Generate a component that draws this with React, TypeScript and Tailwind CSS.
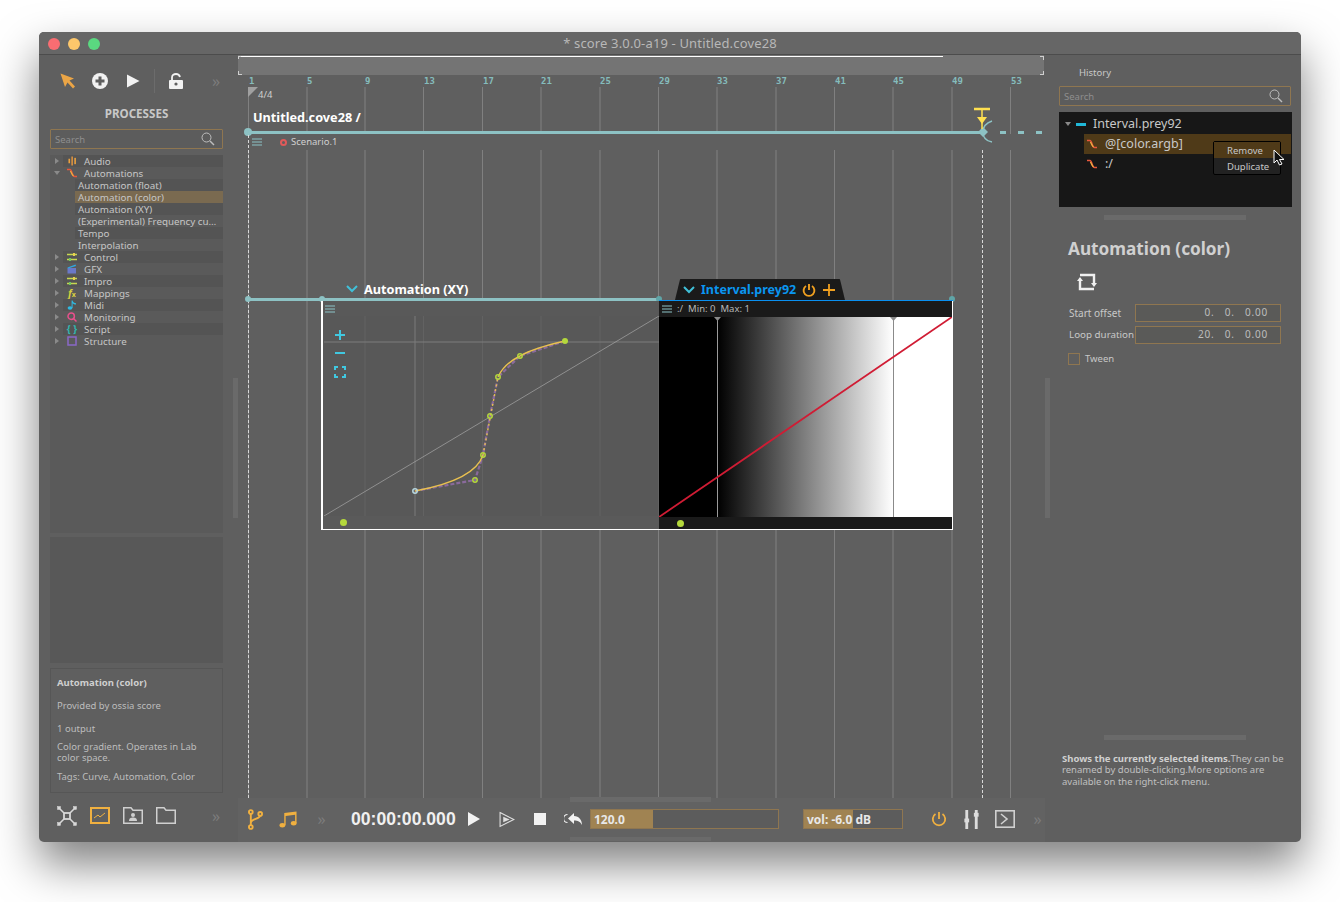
import React from 'react'

const GRID = [
  { n: 1, x: 248, wide: false }, { n: 5, x: 306, wide: true }, { n: 9, x: 364, wide: true }, { n: 13, x: 423, wide: false },
  { n: 17, x: 482, wide: false }, { n: 21, x: 540, wide: true }, { n: 25, x: 599, wide: true }, { n: 29, x: 658, wide: false },
  { n: 33, x: 716, wide: true }, { n: 37, x: 775, wide: true }, { n: 41, x: 834, wide: false }, { n: 45, x: 892, wide: true },
  { n: 49, x: 951, wide: true }, { n: 53, x: 1010, wide: false },
]

const FONT = "font-['Noto_Sans',sans-serif]"

function Chevrons() {
  return <span className="text-[16px] leading-none text-[#7c7c7c]">»</span>
}

function Squiggle({ className = 'w-[12px] h-[10px]' }: { className?: string }) {
  return (
    <svg viewBox="0 0 12 10" className={className} fill="none">
      <path d="M1 1.5 H4 C6 1.5 6 8.5 8.5 8.5 H11" stroke="#e8583c" strokeWidth="1.5" />
      <path d="M4.5 3 C5.5 5 6 7 7.5 8" stroke="#f0b040" strokeWidth="1.2" />
    </svg>
  )
}

function Sliders() {
  return (
    <svg viewBox="0 0 12 10" className="w-[12px] h-[10px]" fill="none" stroke="#c8d850" strokeWidth="1.4">
      <path d="M1 2.5H11M1 7.5H11" />
      <path d="M8 1V4" stroke="#e8d050" strokeWidth="2" />
      <path d="M4 6V9" stroke="#70c860" strokeWidth="2" />
    </svg>
  )
}

const TREE_ICONS: Record<string, React.ReactNode> = {
  Audio: (
    <svg viewBox="0 0 10 10" className="w-[9px] h-[10px]" fill="#e8a040">
      <rect x="0.5" y="2.5" width="1.8" height="5" /><rect x="3.7" y="0" width="1.8" height="10" fill="#d89040" /><rect x="7" y="1.5" width="1.8" height="7" />
    </svg>
  ),
  Automations: <Squiggle />,
  Control: <Sliders />,
  GFX: (
    <svg viewBox="0 0 10 10" className="w-[10px] h-[10px]">
      <rect x="0.5" y="4" width="8.5" height="5.5" fill="#6a78c8" />
      <path d="M0.5 3.5 L8.5 0.5 L9 2 L1 4.5Z" fill="#30a8e0" />
    </svg>
  ),
  Impro: <Sliders />,
  Mappings: <span className="text-[10px] leading-none italic font-bold text-[#d8d040]">f<span className="text-[7px] not-italic">x</span></span>,
  Midi: (
    <svg viewBox="0 0 10 10" className="w-[10px] h-[10px]" fill="#30b8e0">
      <ellipse cx="3" cy="8" rx="2.4" ry="1.8" />
      <path d="M4.6 0.5H5.6C6 2.5 7.5 3 9 3.2V4.6C7.5 4.6 6.4 4 5.6 3.2V8H4.6Z" />
    </svg>
  ),
  Monitoring: (
    <svg viewBox="0 0 10 10" className="w-[10px] h-[10px]" fill="none" stroke="#e8508c" strokeWidth="1.5">
      <circle cx="4.2" cy="4.2" r="3.2" /><path d="M6.5 6.5L9.5 9.5" />
    </svg>
  ),
  Script: <span className="text-[10px] leading-none font-bold text-[#30b8b0]">{'{ }'}</span>,
  Structure: (
    <svg viewBox="0 0 10 10" className="w-[10px] h-[10px]" fill="none" stroke="#8a68c8" strokeWidth="1.5">
      <rect x="1" y="1" width="8" height="8" />
    </svg>
  ),
}

function Arrow({ open = false }: { open?: boolean }) {
  return open ? (
    <span className="w-0 h-0 border-x-[3px] border-x-transparent border-t-[4px] border-t-[#8a8a8a]" />
  ) : (
    <span className="w-0 h-0 border-y-[3px] border-y-transparent border-l-[4px] border-l-[#8a8a8a]" />
  )
}

function TreeRow({ label, odd, open }: { label: string; odd: boolean; open?: boolean }) {
  return (
    <div className="flex items-center h-[12px]">
      <div className="w-[13px] flex justify-center pl-[1px]"><Arrow open={open} /></div>
      <div className={`flex-1 flex items-center h-full ${odd ? 'bg-[#5a5a5a]' : 'bg-[#545454]'}`}>
        <div className="w-[21px] pr-[3px] flex justify-center">{TREE_ICONS[label]}</div>
        <span className="text-[9.8px] leading-none pt-[1px] text-[#c6c6c6]">{label}</span>
      </div>
    </div>
  )
}

function SubRow({ label, odd, selected }: { label: string; odd: boolean; selected?: boolean }) {
  return (
    <div className="flex h-[12px] pl-[25px]">
      <div className={`flex-1 flex items-center pl-[3px] min-w-0 ${selected ? 'bg-[#7a6a50]' : odd ? 'bg-[#5a5a5a]' : 'bg-[#545454]'}`}>
        <span className="text-[9.8px] leading-none pt-[1px] text-[#c6c6c6] whitespace-nowrap">{label}</span>
      </div>
    </div>
  )
}

function SearchBox({ className }: { className: string }) {
  return (
    <div className={`flex items-center justify-between h-[20px] border border-[#8f7650] rounded-[1px] bg-[#5c5c5c] pl-[4px] pr-[7px] ${className}`}>
      <span className="text-[9.5px] pt-[2px] text-[#8e8e8e]">Search</span>
      <svg viewBox="0 0 14 14" className="w-[14px] h-[14px]" fill="none" stroke="#bdbdbd" strokeWidth="1">
        <circle cx="5.5" cy="5.5" r="4.5" /><path d="M9 9L13 13" strokeWidth="1.4" />
      </svg>
    </div>
  )
}

function LeftPanel() {
  return (
    <div className="w-[199px] shrink-0 flex flex-col pl-[2px]">
      <div className="h-[51px] flex items-center pl-[16px]">
        <div className="w-[22px] flex justify-center">
          <svg viewBox="0 0 16 16" className="w-[16px] h-[16px]" fill="#eba546"><path d="M0.5 0.5L14 5.5L9.5 7.5L15 13.5L13 15.5L7.5 9.5L5 14Z" /></svg>
        </div>
        <div className="w-[33px] ml-[4px] flex justify-center">
          <svg viewBox="0 0 16 16" className="w-[16px] h-[16px]"><circle cx="8" cy="8" r="8" fill="#f2f2f2" /><path d="M8 3.5V12.5M3.5 8H12.5" stroke="#5f5f5f" strokeWidth="3" /></svg>
        </div>
        <div className="w-[33px] flex justify-center">
          <svg viewBox="0 0 14 14" className="w-[14px] h-[14px]" fill="#f2f2f2"><path d="M1 0.5L13.5 7L1 13.5Z" /></svg>
        </div>
        <div className="w-[1px] h-[24px] ml-[5px] bg-[#6c6c6c]" />
        <div className="w-[41px] flex justify-center">
          <svg viewBox="0 0 14 16" className="w-[14px] h-[16px]">
            <path d="M3 7V4.5C3 2 5 1 7 1C9 1 10.5 2.2 11 4" fill="none" stroke="#f2f2f2" strokeWidth="1.8" />
            <rect x="0" y="7" width="14" height="9" rx="1" fill="#f2f2f2" />
            <circle cx="7" cy="11" r="1.6" fill="#5f5f5f" />
          </svg>
        </div>
        <div className="ml-[16px]"><Chevrons /></div>
      </div>
      <div className="text-center text-[11.6px] font-bold text-[#c8c8c8] leading-[14px] mt-[1px] pr-[6px]">PROCESSES</div>
      <SearchBox className="ml-[9px] w-[173px] mt-[8px]" />
      <div className="ml-[9px] w-[173px] h-[378px] mt-[6px] bg-[#5a5a5a]">
        <TreeRow label="Audio" odd={false} />
        <TreeRow label="Automations" odd open />
        <SubRow label="Automation (float)" odd={false} />
        <SubRow label="Automation (color)" odd selected />
        <SubRow label="Automation (XY)" odd={false} />
        <SubRow label="(Experimental) Frequency cu…" odd />
        <SubRow label="Tempo" odd={false} />
        <SubRow label="Interpolation" odd />
        <TreeRow label="Control" odd={false} />
        <TreeRow label="GFX" odd />
        <TreeRow label="Impro" odd={false} />
        <TreeRow label="Mappings" odd />
        <TreeRow label="Midi" odd={false} />
        <TreeRow label="Monitoring" odd />
        <TreeRow label="Script" odd={false} />
        <TreeRow label="Structure" odd />
      </div>
      <div className="ml-[9px] w-[173px] h-[126px] mt-[4px] bg-[#585858]" />
      <div className="ml-[9px] w-[173px] h-[125px] mt-[5px] border border-[#565656] px-[6px] pt-[8px] text-[9.5px] leading-[11px] text-[#bdbdbd]">
        <div className="font-bold text-[#cfcfcf]">Automation (color)</div>
        <div className="mt-[12px]">Provided by ossia score</div>
        <div className="mt-[12px]">1 output</div>
        <div className="mt-[7px]">Color gradient. Operates in Lab<br />color space.</div>
        <div className="mt-[8px]">Tags: Curve, Automation, Color</div>
      </div>
      <div className="flex-1 flex items-center pl-[9px] pb-[4px]">
        <div className="w-[33px] flex justify-center">
          <svg viewBox="0 0 20 20" className="w-[20px] h-[20px]" fill="#d8d8d8" stroke="#d8d8d8">
            <rect x="0.5" y="0.5" width="3" height="3" strokeWidth="0.5" /><rect x="16.5" y="0.5" width="3" height="3" strokeWidth="0.5" />
            <rect x="0.5" y="16.5" width="3" height="3" strokeWidth="0.5" /><rect x="16.5" y="16.5" width="3" height="3" strokeWidth="0.5" />
            <path d="M3 3L7 7M17 3L13 7M3 17L7 13M17 17L13 13" strokeWidth="1.6" />
            <rect x="7" y="7" width="6" height="6" fill="none" strokeWidth="1.8" />
          </svg>
        </div>
        <div className="w-[33px] flex justify-center">
          <svg viewBox="0 0 20 17" className="w-[20px] h-[17px]" fill="none">
            <rect x="1" y="1" width="18" height="15" stroke="#f0b040" strokeWidth="2" />
            <path d="M4 11L8 8L10 10L15 6" stroke="#f0b040" strokeWidth="1" />
          </svg>
        </div>
        <div className="w-[33px] flex justify-center">
          <svg viewBox="0 0 20 17" className="w-[20px] h-[17px]" fill="none" stroke="#d0d0d0">
            <path d="M0.75 16.25V0.75H8L10 3.25H19.25V16.25Z" strokeWidth="1.5" />
            <circle cx="10" cy="8" r="2" fill="#d0d0d0" stroke="none" />
            <path d="M6 14C6 11 8 10.5 10 10.5C12 10.5 14 11 14 14Z" fill="#d0d0d0" stroke="none" />
          </svg>
        </div>
        <div className="w-[33px] flex justify-center">
          <svg viewBox="0 0 20 17" className="w-[20px] h-[17px]" fill="none" stroke="#d0d0d0" strokeWidth="1.5">
            <path d="M0.75 16.25V0.75H8L10 3.25H19.25V16.25Z" />
          </svg>
        </div>
        <div className="ml-[30px]"><Chevrons /></div>
      </div>
    </div>
  )
}

function ProcessBoxes() {
  return (
    <div className="absolute left-[83px] top-[246px] w-[632px] h-[229px] flex border-b-[1px] border-white">
      {/* Automation (XY) */}
      <div className="w-[338px] flex flex-col border-l-[2px] border-white">
        <div className="h-[15px] bg-[#595959] flex items-center pl-[2px]">
          <svg viewBox="0 0 10 8" className="w-[10px] h-[8px]" fill="none" stroke="#8cc4c8" strokeWidth="1"><path d="M0 1H10M0 4H10M0 7H10" /></svg>
        </div>
        <div className="relative h-[200px] bg-[#555555]/70">
          <svg viewBox="0 0 335 200" className="absolute left-[1px] top-0 w-[335px] h-[200px]" fill="none">
            <path d="M0 26H335" stroke="#7c7c7c" />
            <path d="M91 0V200" stroke="#7a7a7a" />
            <path d="M0 200L335 0" stroke="#a8a8a8" strokeWidth="0.7" />
            <path d="M91 175L151 164L159 139L166 100L174 61L196 40L241 25" stroke="#8a6a9c" strokeWidth="2.2" strokeDasharray="4 2" />
            <path d="M91 175Q151 164 159 139M174 61Q180 48 196 40Q210 32 241 25" stroke="#e8c050" strokeWidth="1.4" />
            <path d="M159 139L174 61" stroke="#e8c050" strokeWidth="1.4" strokeDasharray="2 3" />
            {[[151, 164], [159, 139], [166, 100], [174, 61], [196, 40]].map(([cx, cy]) => (
              <circle key={cx} cx={cx} cy={cy} r="2.2" stroke="#b4d83c" strokeWidth="1.5" />
            ))}
            <circle cx="91" cy="175" r="2.2" stroke="#b8d8e0" strokeWidth="1.5" />
            <circle cx="241" cy="25" r="3" fill="#b4d83c" />
          </svg>
          <div className="absolute left-[11px] top-[14px] flex flex-col items-center gap-[8px]">
            <svg viewBox="0 0 10 10" className="w-[10px] h-[10px]" stroke="#40c8e0" strokeWidth="2"><path d="M5 0V10M0 5H10" /></svg>
            <svg viewBox="0 0 10 10" className="w-[10px] h-[10px]" stroke="#40c8e0" strokeWidth="2"><path d="M0 5H10" /></svg>
            <svg viewBox="0 0 12 12" className="w-[12px] h-[12px]" fill="none" stroke="#40c8e0" strokeWidth="2"><path d="M1 4V1H4M8 1H11V4M11 8V11H8M4 11H1V8" /></svg>
          </div>
        </div>
        <div className="flex-1 bg-[#5a5a5a] flex items-center pl-[17px]">
          <span className="w-[7px] h-[7px] rounded-full bg-[#b4d83c]" />
        </div>
      </div>
      {/* Automation (color) */}
      <div className="flex-1 flex flex-col border-r-[1px] border-white">
        <div className="h-[16px] bg-[#1a1a1a] flex items-center pl-[3px] gap-[5px] text-[9.5px] leading-none text-[#b8b8b8]">
          <svg viewBox="0 0 10 8" className="w-[10px] h-[8px]" fill="none" stroke="#8cc4c8" strokeWidth="1"><path d="M0 1H10M0 4H10M0 7H10" /></svg>
          <span>:/</span>
          <span>Min: 0</span>
          <span>Max: 1</span>
        </div>
        <div className="relative h-[200px] bg-[linear-gradient(90deg,#000_20%,#fff_80%)]">
          <svg viewBox="0 0 293 200" className="absolute inset-0 w-[293px] h-[200px]" fill="none">
            <path d="M58.5 0V200" stroke="#9a9a9a" />
            <path d="M234.5 0V200" stroke="#8a8a8a" />
            <path d="M55 0H62L58.5 4Z M231 0H238L234.5 4Z" fill="#8a8a8a" />
            <path d="M0 200L293 0" stroke="#d01c34" strokeWidth="1.8" />
          </svg>
        </div>
        <div className="flex-1 bg-[#1a1a1a] flex items-center pl-[18px]">
          <span className="w-[7px] h-[7px] rounded-full bg-[#b4d83c]" />
        </div>
      </div>
    </div>
  )
}

function Canvas() {
  return (
    <div className="relative flex-1 overflow-hidden">
      {/* top mini-map band */}
      <div className="relative h-[20px] w-[806px] bg-[#747474]">
        <div className="absolute left-0 top-[1px] w-[705px] h-[1px] bg-white" />
        <div className="absolute left-0 top-[1px] w-[3px] h-[3px] border-t border-l border-[#cfcfcf]" />
        <div className="absolute left-0 bottom-0 w-[4px] h-[4px] border-b border-l border-[#cfcfcf]" />
        <div className="absolute right-0 top-[1px] w-[4px] h-[4px] border-t border-r border-[#cfcfcf]" />
        <div className="absolute right-0 bottom-0 w-[4px] h-[4px] border-b border-r border-[#cfcfcf]" />
      </div>

      {GRID.map((g) => (
        <React.Fragment key={g.n}>
          <span
            className="absolute top-[21px] text-[9px] leading-[11px] font-bold text-[#85bcbc] font-['DejaVu_Sans_Mono',monospace]"
            style={{ left: g.x - 238 + 1 }}
          >
            {g.n}
          </span>
          <div
            className={`absolute top-[32px] bottom-0 ${g.wide ? 'w-[2px] bg-[#707070]' : 'w-[1px] bg-[#808080]'}`}
            style={{ left: g.x - 238 }}
          />
        </React.Fragment>
      ))}

      <svg viewBox="0 0 10 10" className="absolute left-[10px] top-[32px] w-[10px] h-[10px]"><path d="M0 0H10L0 10Z" fill="#a0a0a0" /></svg>
      <span className="absolute left-[20px] top-[34px] text-[9.5px] leading-[12px] text-[#d0d0d0]">4/4</span>
      <span className="absolute left-[15px] top-[54px] text-[12.7px] leading-[16px] font-bold text-white">Untitled.cove28 /</span>

      {/* scenario header */}
      <div className="absolute left-[10px] top-[79px] w-[785px] h-[16px] bg-[#5f5f5f] flex items-center pl-[4px]">
        <svg viewBox="0 0 10 8" className="w-[10px] h-[8px]" fill="none" stroke="#8cc4c8" strokeWidth="1"><path d="M0 1H10M0 4H10M0 7H10" /></svg>
        <span className="ml-[18px] w-[7px] h-[7px] rounded-full border-2 border-[#e05a5a]" />
        <span className="ml-[4px] text-[9.5px] leading-none text-[#d0d0d0]">Scenario.1</span>
      </div>

      {/* main interval */}
      <div className="absolute left-[10px] top-[76px] w-[735px] h-[3px] bg-[#8dc2c4]" />
      <span className="absolute left-[6px] top-[73px] w-[8px] h-[8px] rounded-full bg-[#8dc2c4]" />
      <div className="absolute left-[762px] top-[76px] w-[42px] h-[3px] bg-[repeating-linear-gradient(90deg,#8dc2c4_0,#8dc2c4_6px,transparent_6px,transparent_18px)]" />
      <svg viewBox="0 0 24 32" className="absolute left-[735px] top-[62px] w-[24px] h-[32px]" fill="none">
        <path d="M10 10L5 15L10 20L15 15Z" fill="#8dc2c4" />
        <path d="M19 4C13 6 10 10 10 15C10 20 13 24 19 25" stroke="#8dc2c4" strokeWidth="1.5" />
      </svg>
      <svg viewBox="0 0 18 26" className="absolute left-[735px] top-[52px] w-[18px] h-[26px]" fill="none">
        <path d="M1 2H17" stroke="#ffe050" strokeWidth="2.5" />
        <path d="M9 2V22" stroke="#ffe050" strokeWidth="1.5" />
        <path d="M4 10H14L9 17Z" fill="#ffe050" />
      </svg>

      {/* dashed bounds */}
      <div className="absolute left-[10px] top-[80px] bottom-0 border-l border-dashed border-[#d8d8d8]" />
      <div className="absolute left-[744px] top-[95px] bottom-0 border-l border-dashed border-[#d8d8d8]" />

      {/* second interval */}
      <div className="absolute left-[10px] top-[243px] w-[410px] h-[3px] bg-[#8dc2c4]" />
      <span className="absolute left-[7px] top-[241px] w-[6px] h-[6px] rounded-full bg-[#8dc2c4]" />
      <span className="absolute left-[81px] top-[241px] w-[6px] h-[6px] rounded-full bg-[#8dc2c4]" />
      <span className="absolute left-[418px] top-[241px] w-[6px] h-[6px] rounded-full bg-[#5fa5a8]" />
      <span className="absolute left-[711px] top-[241px] w-[6px] h-[6px] rounded-full bg-[#5fa5a8]" />
      <div className="absolute left-[108px] top-[226px] flex items-center gap-[6px]">
        <svg viewBox="0 0 12 8" className="w-[12px] h-[8px]" fill="none" stroke="#40c0d8" strokeWidth="2"><path d="M1 1L6 6L11 1" /></svg>
        <span className="text-[12.7px] leading-[16px] font-bold text-white">Automation (XY)</span>
      </div>

      {/* tab over the selected interval */}
      <div className="absolute left-[437px] top-[224px] w-[170px] h-[21px] bg-[#1a1a1a] rounded-t-[6px] [clip-path:polygon(3%_0,97%_0,100%_100%,0_100%)] flex items-center pl-[8px]">
        <svg viewBox="0 0 12 8" className="w-[12px] h-[8px]" fill="none" stroke="#40c0d8" strokeWidth="2"><path d="M1 1L6 6L11 1" /></svg>
        <span className="ml-[6px] text-[12.5px] leading-[16px] font-bold text-[#0a96f0]">Interval.prey92</span>
        <svg viewBox="0 0 14 14" className="ml-[6px] w-[14px] h-[14px]" fill="none" stroke="#f0a020" strokeWidth="1.9"><path d="M7 1V7" /><path d="M4 3A5.4 5.4 0 1 0 10 3" /></svg>
        <svg viewBox="0 0 12 12" className="ml-[7px] w-[12px] h-[12px]" stroke="#f0a020" strokeWidth="1.8"><path d="M6 0V12M0 6H12" /></svg>
      </div>
      <div className="absolute left-[421px] top-[245px] w-[294px] h-[2px] bg-[#0a90f0]" />

      <ProcessBoxes />
    </div>
  )
}

function Slot({ children }: { children: React.ReactNode }) {
  return <div className="w-[33px] flex justify-center items-center shrink-0">{children}</div>
}

function Transport() {
  return (
    <div className="relative h-[44px] shrink-0 flex items-center bg-[#626262] pl-[1px] pb-[2px]">
      <Slot>
        <svg viewBox="0 0 16 22" className="w-[15px] h-[21px]" fill="none" stroke="#f0b040" strokeWidth="2">
          <circle cx="3" cy="3" r="2" /><circle cx="13" cy="5" r="2" /><circle cx="3" cy="19" r="2" />
          <path d="M3 5V17M3 15C3 10 12 11 13 7" />
        </svg>
      </Slot>
      <Slot>
        <svg viewBox="0 0 20 18" className="w-[19px] h-[17px]" fill="#f0b040">
          <ellipse cx="3.5" cy="15" rx="3" ry="2.4" /><ellipse cx="15.5" cy="13" rx="3" ry="2.4" />
          <path d="M5.5 15V2L18.5 0.5V13H17V4L7 5.2V15Z" />
        </svg>
      </Slot>
      <Slot><Chevrons /></Slot>
      <span className="ml-[13px] w-[106px] pt-[2px] shrink-0 whitespace-nowrap text-[17.6px] leading-none font-bold text-[#f0f0f0] font-['Liberation_Sans',sans-serif]">00:00:00.000</span>
      <Slot>
        <svg viewBox="0 0 12 14" className="w-[12px] h-[14px]" fill="#f2f2f2"><path d="M0 0L12 7L0 14Z" /></svg>
      </Slot>
      <Slot>
        <svg viewBox="0 0 15 15" className="w-[16px] h-[17px]" fill="none" stroke="#e0e0e0"><path d="M1 1L14 7.5L1 14Z" /><path d="M4 5L10 7.5L4 10Z" fill="#e0e0e0" stroke="none" /></svg>
      </Slot>
      <Slot><span className="block w-[12px] h-[12px] bg-[#f2f2f2]" /></Slot>
      <Slot>
        <svg viewBox="0 0 18 12" className="w-[18px] h-[12px]" fill="#f2f2f2">
          <path d="M10 0V3C15 3 18 7 18 12C16 8.5 14 7.5 10 7.5V11L4 5.5Z" />
          <path d="M3.5 1.5A4 4 0 0 0 3.5 9.5" fill="none" stroke="#f2f2f2" strokeWidth="1.2" />
        </svg>
      </Slot>
      <div className="relative ml-[1px] w-[189px] h-[20px] border border-[#8f7650] bg-[#5c5c5c] shrink-0">
        <div className="h-full w-[62px] bg-[#a08352]" />
        <span className="absolute left-[3px] top-0 text-[12px] leading-[19px] font-bold text-[#e8e8e8]">120.0</span>
      </div>
      <div className="relative ml-[24px] w-[100px] h-[20px] border border-[#8f7650] bg-[#5c5c5c] shrink-0">
        <div className="h-full w-[49px] bg-[#a08352]" />
        <span className="absolute left-[3px] top-0 text-[12px] leading-[19px] font-bold text-[#e8e8e8] whitespace-nowrap">vol: -6.0 dB</span>
      </div>
      <div className="ml-[19px] flex">
        <Slot>
          <svg viewBox="0 0 16 16" className="w-[16px] h-[16px]" fill="none" stroke="#f0b040" strokeWidth="1.8"><path d="M8 1V8" /><path d="M4.5 3A6.2 6.2 0 1 0 11.5 3" /></svg>
        </Slot>
        <Slot>
          <svg viewBox="0 0 15 20" className="w-[15px] h-[19px]" fill="#dcdcdc">
            <rect x="1" y="0" width="3" height="20" /><rect x="11" y="0" width="3" height="20" />
            <rect x="0" y="9" width="5" height="4" /><rect x="10" y="3" width="5" height="4" />
          </svg>
        </Slot>
        <Slot>
          <svg viewBox="0 0 20 18" className="w-[20px] h-[18px]" fill="none" stroke="#d0d0d0" strokeWidth="1.6"><rect x="0.8" y="0.8" width="18.4" height="16.4" /><path d="M6 4L12 9L6 14" /></svg>
        </Slot>
        <Slot><Chevrons /></Slot>
      </div>
      <div className="absolute left-[332px] top-[-1px] w-[141px] h-[5px] bg-[#6a6a6a]" />
      <div className="absolute left-[332px] bottom-[1px] w-[141px] h-[4px] bg-[#6a6a6a]" />
    </div>
  )
}

function RightPanel() {
  return (
    <div className="relative w-[256px] shrink-0">
      <div className="pl-[34px] pt-[12px] text-[9.5px] leading-[12px] text-[#c8c8c8]">History</div>
      <SearchBox className="ml-[14px] w-[232px] mt-[7px]" />
      <div className="relative ml-[14px] w-[233px] h-[95px] mt-[6px] bg-[#171717] pt-[1px] text-[12.5px] leading-[20px] text-[#c8c8c8]">
        <div className="flex items-center h-[20px] mt-[1px]">
          <div className="w-[17px] flex justify-center pl-[1px]"><Arrow open /></div>
          <span className="w-[10px] h-[3px] bg-[#20b8d8]" />
          <span className="ml-[7px]">Interval.prey92</span>
        </div>
        <div className="flex items-center h-[20px] ml-[25px] bg-[#4f3a18] pl-[4px] mr-[1px]">
          <Squiggle className="w-[12px] h-[10px] -ml-[2px]" />
          <span className="ml-[7px]">@[color.argb]</span>
        </div>
        <div className="flex items-center h-[20px] ml-[25px] pl-[4px]">
          <Squiggle className="w-[12px] h-[10px] -ml-[2px]" />
          <span className="ml-[7px]">:/</span>
        </div>
        <div className="absolute left-[154px] top-[29px] w-[68px] h-[34px] bg-[#222222] border border-black rounded-[2px] text-[9.5px] text-[#c8c8c8]">
          <div className="h-[16px] leading-[18px] bg-[#4f3a18] pl-[13px]">Remove</div>
          <div className="h-[16px] leading-[17px] pl-[13px]">Duplicate</div>
        </div>
        <svg viewBox="0 0 12 17" className="absolute left-[214px] top-[37px] w-[12px] h-[17px]">
          <path d="M1 1V14L4 11L6.5 16L9 15L6.5 10.5H11Z" fill="#111" stroke="#fff" strokeWidth="1" />
        </svg>
      </div>
      <div className="ml-[59px] w-[142px] h-[5px] mt-[8px] bg-[#6a6a6a]" />
      <div className="pl-[23px] mt-[19px] text-[17.2px] leading-[20px] font-bold text-[#d0d0d0]">Automation (color)</div>
      <div className="pl-[32px] mt-[14px]">
        <svg viewBox="0 0 20 18" className="w-[20px] h-[18px]" fill="none" stroke="#f0f0f0" strokeWidth="2.4">
          <path d="M3 7V16H17" /><path d="M17 11V2H3" />
          <path d="M0 8L3 4L6 8Z" fill="#f0f0f0" stroke="none" /><path d="M14 10L17 14L20 10Z" fill="#f0f0f0" stroke="none" />
        </svg>
      </div>
      <div className="flex items-center mt-[13px] h-[18px]">
        <span className="w-[90px] pl-[24px] text-[10px] text-[#c8c8c8] whitespace-nowrap">Start offset</span>
        <div className="w-[146px] h-full border border-[#8f7650] bg-[#5a5a58] text-right pr-[12px] text-[10px] leading-[14px] tracking-[0.8px] text-[#bdbdbd] whitespace-pre">0.   0.   0.00</div>
      </div>
      <div className="flex items-center mt-[4px] h-[18px]">
        <span className="w-[90px] pl-[24px] text-[9.8px] text-[#c8c8c8] whitespace-nowrap">Loop duration</span>
        <div className="w-[146px] h-full border border-[#8f7650] bg-[#5a5a58] text-right pr-[12px] text-[10px] leading-[14px] tracking-[0.8px] text-[#bdbdbd] whitespace-pre">20.   0.   0.00</div>
      </div>
      <div className="flex items-center pl-[23px] mt-[9px]">
        <span className="w-[12px] h-[12px] border border-[#8f7650]" />
        <span className="ml-[5px] text-[9.5px] leading-[12px] text-[#c8c8c8]">Tween</span>
      </div>
      <div className="ml-[59px] w-[142px] h-[5px] mt-[370px] bg-[#6a6a6a]" />
      <div className="pl-[17px] pr-[14px] mt-[13px] text-[9.5px] leading-[11.3px] text-[#c0c0c0] whitespace-nowrap">
        <div><b className="font-bold text-[#d0d0d0]">Shows the currently selected items.</b><span>They can be</span></div>
        <div>renamed by double-clicking.More options are</div>
        <div>available on the right-click menu.</div>
      </div>
    </div>
  )
}

export default function App() {
  return (
    <div className={`w-[1340px] h-[902px] bg-white pt-[32px] pl-[39px] overflow-hidden ${FONT}`}>
      <div className="relative w-[1262px] h-[810px] rounded-[5px] overflow-hidden bg-[#5f5f5f] flex flex-col shadow-[0_22px_45px_rgba(0,0,0,0.5)]">
        <div className="h-[23px] shrink-0 relative flex items-center justify-center pt-[2px] bg-[#666666] border-b border-[#4c4c4c]">
          <div className="absolute left-[9px] top-[6px] flex gap-[8px]">
            <span className="w-[12px] h-[12px] rounded-full bg-[#f96d72]" />
            <span className="w-[12px] h-[12px] rounded-full bg-[#fdc76b]" />
            <span className="w-[12px] h-[12px] rounded-full bg-[#5ad880]" />
          </div>
          <span className="text-[13px] tracking-[0.15px] text-[#b8b8b8]">* score 3.0.0-a19 - Untitled.cove28</span>
        </div>
        <div className="flex-1 flex min-h-0">
          <LeftPanel />
          <div className="flex-1 min-w-0 flex flex-col">
            <Canvas />
            <Transport />
          </div>
          <RightPanel />
        </div>
        <div className="absolute left-[194px] top-[346px] w-[5px] h-[140px] bg-[#6a6a6a]" />
        <div className="absolute left-[1006px] top-[346px] w-[5px] h-[140px] bg-[#6a6a6a]" />
      </div>
    </div>
  )
}
